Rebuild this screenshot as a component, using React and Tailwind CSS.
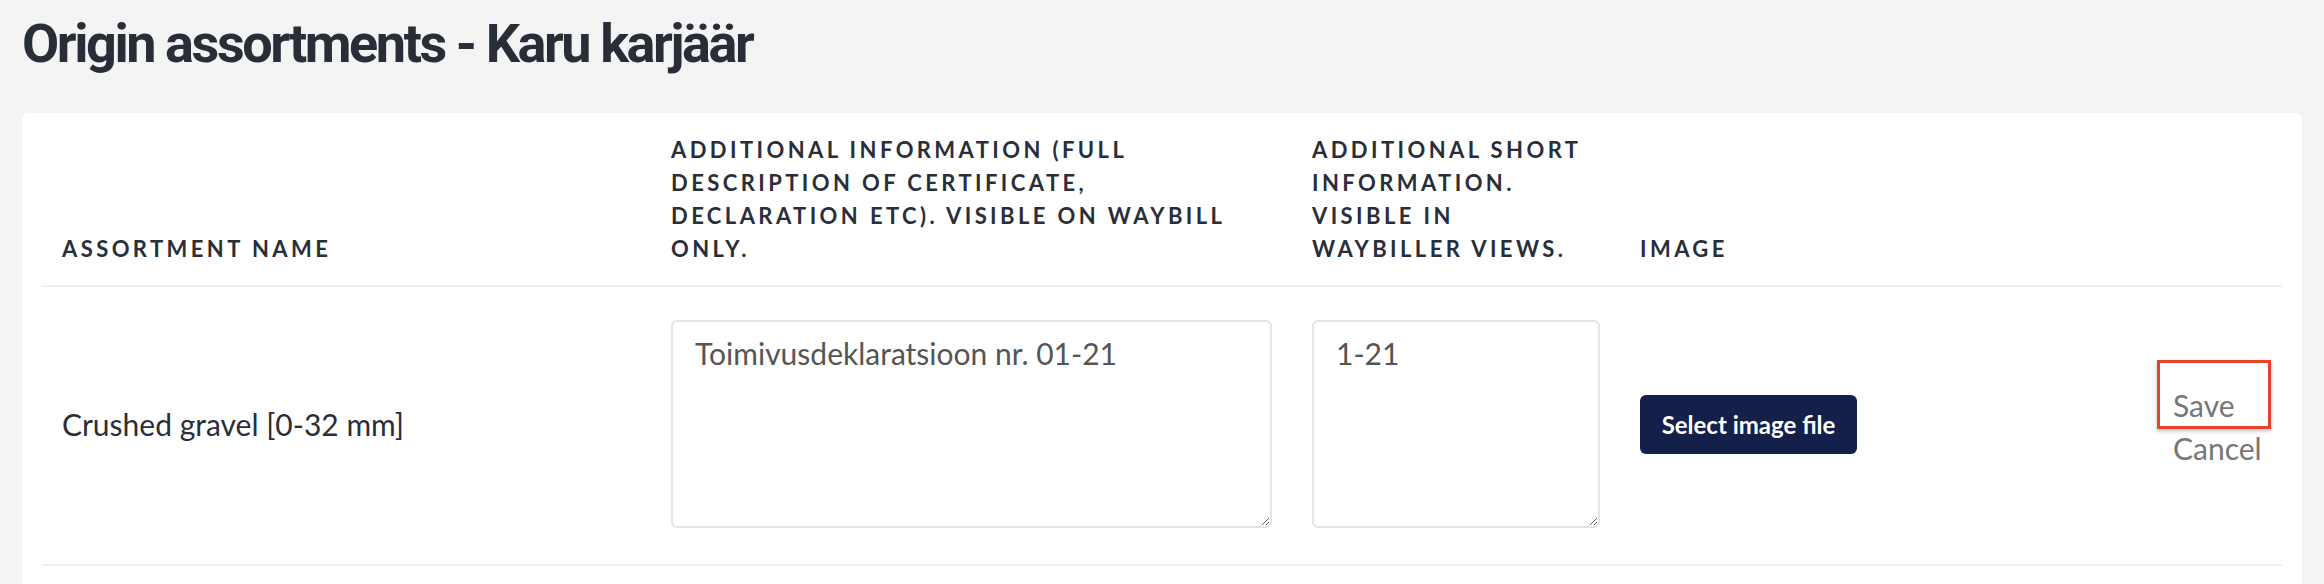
import React from 'react';

const rows = [
  {
    name: 'Crushed gravel [0-32 mm]',
    info: 'Toimivusdeklaratsioon nr. 01-21',
    shortInfo: '1-21',
  },
];

const cols = 'grid grid-cols-[609px_641px_328px_533px_1fr]';

export default function App() {
  return (
    <div className="min-h-screen bg-[#f4f4f4] px-[22px] font-['Lato',sans-serif] text-[#2a2e39]">
      <h1 className="pt-[16px] font-['Roboto',sans-serif] text-[54px] font-bold leading-[56px] tracking-[-0.045em] text-[#292d38]">
        Origin assortments - Karu karjäär
      </h1>

      <div className="mt-[41px] rounded-md bg-white px-5 pb-10">
        {/* column headings */}
        <div className={`${cols} items-end border-b-2 border-[#efefef] text-[22px] font-bold uppercase leading-[33px] tracking-[0.155em]`}>
          <div className="px-5 py-5">Assortment name</div>
          <div className="px-5 py-5">
            <div className="max-w-[572px]">
              Additional information (full description of certificate, declaration etc). Visible on waybill only.
            </div>
          </div>
          <div className="px-5 py-5">
            <div className="max-w-[276px]">Additional short information. Visible in waybiller views.</div>
          </div>
          <div className="px-5 py-5">Image</div>
          <div className="px-5 py-5" />
        </div>

        {rows.map((row) => (
          <div key={row.name} className={`${cols} items-center border-b-2 border-[#efefef] text-[30px] leading-[43px]`}>
            <div className="px-5 pt-[33px] pb-[36px]">{row.name}</div>
            <div className="px-5 pt-[33px] pb-[36px]">
              <textarea
                defaultValue={row.info}
                className="block h-[208px] w-full rounded-md border-2 border-[#e2e5ea] px-[22px] pt-[10px] text-[30px] leading-[43px] text-[#555] outline-none"
              />
            </div>
            <div className="px-5 pt-[33px] pb-[36px]">
              <textarea
                defaultValue={row.shortInfo}
                className="block h-[208px] w-full rounded-md border-2 border-[#e2e5ea] px-[22px] pt-[10px] text-[30px] leading-[43px] text-[#555] outline-none"
              />
            </div>
            <div className="px-5 pt-[33px] pb-[36px]">
              <button className="h-[59px] w-[217px] rounded-md bg-[#14204a] text-[24px] font-bold text-white">
                Select image file
              </button>
            </div>
            <div className="flex flex-col items-start px-5 pt-[36px] pb-[33px] text-[#777]">
              <span className="relative">
                Save
                <span className="absolute -left-4 -top-6 h-[69px] w-[114px] border-[3px] border-[#e6432b] shadow-[0_2px_4px_rgba(0,0,0,0.25)]" />
              </span>
              <span>Cancel</span>
            </div>
          </div>
        ))}
      </div>
    </div>
  );
}
